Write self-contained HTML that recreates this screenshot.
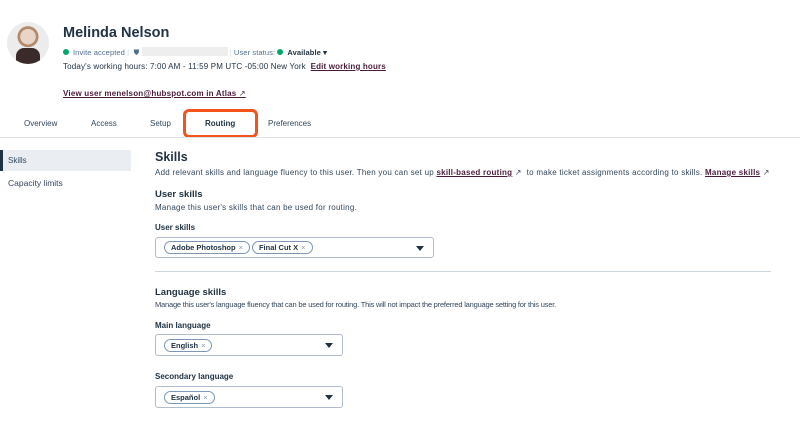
<!DOCTYPE html>
<html><head><meta charset="utf-8"><style>
*{margin:0;padding:0;box-sizing:border-box}
body{width:800px;height:443px;background:#fff;font-family:"Liberation Sans",sans-serif;color:#33475b;position:relative;overflow:hidden;font-size:8.5px}
.a{position:absolute;white-space:nowrap}
.b{font-weight:bold;color:#213343}
.lk{font-weight:bold;color:#4a1d3c;text-decoration:underline}
.sel{position:absolute;border:1px solid #b0bccb;border-radius:3px;background:#fff}
.tag{display:inline-block;border:1px solid #7c98b6;border-radius:10px;padding:1px 6px;font-size:7.5px;font-weight:bold;color:#213343;margin-right:2px;background:#fff}
.tag i{font-style:normal;font-weight:normal;color:#7c98b6;margin-left:3px}
.car{position:absolute;right:9px;top:8px;width:0;height:0;border-left:4px solid transparent;border-right:4px solid transparent;border-top:5px solid #213343}
.dot{display:inline-block;width:6px;height:6px;border-radius:50%;background:#00a86b;margin-right:4px;vertical-align:0}
</style></head><body>
<div class="a" style="left:7px;top:22px;width:42px;height:42px;border-radius:50%;background:radial-gradient(circle at 50% 35%,#e8d5c8 0 22%,#b38a6b 23% 30%,#ececec 31%);overflow:hidden"><div style="position:absolute;left:9px;top:26px;width:24px;height:20px;background:#3a2a2a;border-radius:8px 8px 0 0"></div></div>
<div class="a b" style="left:63px;top:25px;font-size:14.5px">Melinda Nelson</div>
<div class="a" style="left:63px;top:47px;font-size:7.5px;color:#516f90;letter-spacing:0.1px"><span class="dot"></span>Invite accepted <span style="color:#cbd6e2">|</span> &nbsp;<span style="color:#516f90">⛊</span> <span style="display:inline-block;width:86px;height:9px;background:#eee;vertical-align:-1px"></span> <span style="color:#cbd6e2">|</span> User status: <span class="dot"></span><b style="color:#213343">Available ▾</b></div>
<div class="a" style="left:63px;top:62px;font-size:8px;color:#213343;letter-spacing:0.16px">Today's working hours: 7:00 AM - 11:59 PM UTC -05:00 New York &nbsp;<span class="lk">Edit working hours</span></div>
<div class="a lk" style="left:63px;top:89px;font-size:8px;letter-spacing:0.2px">View user menelson@hubspot.com in Atlas <span style="font-weight:normal;text-decoration:none">↗</span></div>
<div class="a" style="left:24px;top:119px;font-size:8px">Overview</div>
<div class="a" style="left:91px;top:119px;font-size:8px">Access</div>
<div class="a" style="left:150px;top:119px;font-size:8px">Setup</div>
<div class="a b" style="left:205px;top:119px;font-size:8px">Routing</div>
<div class="a" style="left:268px;top:119px;font-size:8px">Preferences</div>
<div class="a" style="left:183px;top:109px;width:75px;height:29px;border:3px solid #f2541b;border-radius:6px"></div>
<div class="a" style="left:0;top:137px;width:800px;height:1px;background:#dfe3eb"></div>
<div class="a" style="left:0;top:150px;width:131px;height:21px;background:#eaeef2;border-left:3px solid #213343"></div>
<div class="a" style="left:8px;top:156px;font-size:8px">Skills</div>
<div class="a" style="left:8px;top:178px;font-size:8.5px">Capacity limits</div>
<div class="a b" style="left:155px;top:150px;font-size:12.5px">Skills</div>
<div class="a" style="left:155px;top:168px;font-size:8px;letter-spacing:0.25px">Add relevant skills and language fluency to this user. Then you can set up <span class="lk">skill-based routing</span> ↗ &nbsp;to make ticket assignments according to skills. <span class="lk">Manage skills</span> ↗</div>
<div class="a b" style="left:155px;top:189px;font-size:9.5px">User skills</div>
<div class="a" style="left:155px;top:203px;font-size:8px;letter-spacing:0.25px">Manage this user's skills that can be used for routing.</div>
<div class="a b" style="left:155px;top:223px;font-size:8px">User skills</div>
<div class="sel" style="left:155px;top:237px;width:279px;height:21px;padding:3px 8px"><span class="tag">Adobe Photoshop<i>×</i></span><span class="tag">Final Cut X<i>×</i></span><div class="car"></div></div>
<div class="a" style="left:155px;top:271px;width:616px;height:1px;background:#cbd6e2"></div>
<div class="a b" style="left:155px;top:287px;font-size:9.5px">Language skills</div>
<div class="a" style="left:155px;top:300px;font-size:7.5px;letter-spacing:-0.2px">Manage this user's language fluency that can be used for routing. This will not impact the preferred language setting for this user.</div>
<div class="a b" style="left:155px;top:321px;font-size:8px">Main language</div>
<div class="sel" style="left:155px;top:334px;width:188px;height:22px;padding:4px 8px"><span class="tag">English<i>×</i></span><div class="car"></div></div>
<div class="a b" style="left:155px;top:372px;font-size:8px">Secondary language</div>
<div class="sel" style="left:155px;top:386px;width:188px;height:22px;padding:4px 8px"><span class="tag">Español<i>×</i></span><div class="car"></div></div>
</body></html>
